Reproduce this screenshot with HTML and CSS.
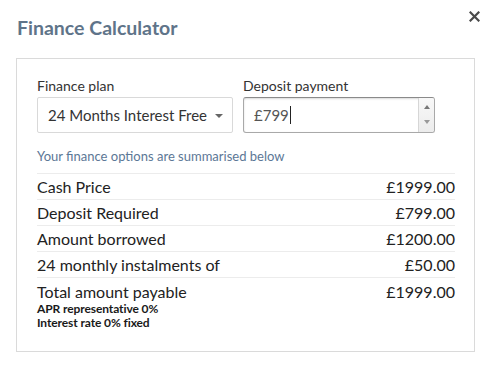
FILE: index.html
```html
<!DOCTYPE html>
<html lang="en">
<head>
    <meta charset="UTF-8">
    <title>Finance Calculator</title>
    <link rel="stylesheet" href="styles.css">
</head>
<body>
    <div class="modal">
        <div class="modal-header">
            <h1 class="modal-title">Finance Calculator</h1>
            <button class="close-btn" aria-label="Close">
                <svg width="11" height="11" viewBox="0 0 11 11">
                    <path d="M1.5 1.5 L9.5 9.5 M9.5 1.5 L1.5 9.5" stroke="#4a4a4a" stroke-width="2.2" stroke-linecap="square"/>
                </svg>
            </button>
        </div>

        <div class="panel">
            <div class="form-row">
                <div class="field field-plan">
                    <label>Finance plan</label>
                    <div class="select">
                        <span>24 Months Interest Free</span>
                        <span class="caret"></span>
                    </div>
                </div>
                <div class="field field-deposit">
                    <label>Deposit payment</label>
                    <div class="number-input">
                        <span class="value">£799<span class="cursor"></span></span>
                        <div class="spinner">
                            <span class="spin-up"></span>
                            <span class="spin-down"></span>
                        </div>
                    </div>
                </div>
            </div>

            <p class="summary-note">Your finance options are summarised below</p>

            <div class="summary">
                <div class="summary-row">
                    <span>Cash Price</span>
                    <span>£1999.00</span>
                </div>
                <div class="summary-row">
                    <span>Deposit Required</span>
                    <span>£799.00</span>
                </div>
                <div class="summary-row">
                    <span>Amount borrowed</span>
                    <span>£1200.00</span>
                </div>
                <div class="summary-row">
                    <span>24 monthly instalments of</span>
                    <span>£50.00</span>
                </div>
                <div class="summary-row total">
                    <div>
                        <span>Total amount payable</span>
                        <p class="small-print">APR representative 0%<br>Interest rate 0% fixed</p>
                    </div>
                    <span>£1999.00</span>
                </div>
            </div>
        </div>
    </div>
</body>
</html>
```

FILE: styles.css
```css
* {
    margin: 0;
    padding: 0;
    box-sizing: border-box;
}

body {
    background: #fff;
    font-family: Lato, 'Open Sans', sans-serif;
    color: #222;
    width: 490px;
    height: 384px;
    overflow: hidden;
}

.modal {
    padding: 14px 15px 0 16px;
}

.modal-header {
    display: flex;
    justify-content: space-between;
    align-items: flex-start;
    height: 44px;
}

.modal-title {
    font-size: 19.5px;
    font-weight: 700;
    color: #5f7489;
    padding-left: 1px;
    line-height: 28px;
}

.close-btn {
    background: none;
    border: none;
    margin-top: -4px;
    margin-right: -5px;
    padding: 0;
    width: 11px;
    height: 11px;
    cursor: pointer;
}

.panel {
    border: 1px solid #dadada;
    width: 459px;
    height: 294px;
    padding: 17px 19px 0 20px;
}

.form-row {
    display: flex;
    gap: 10px;
}

.field label {
    display: block;
    font-size: 14px;
    color: #333;
    line-height: 19px;
    margin-bottom: 2px;
}

.select {
    width: 196px;
    height: 36px;
    border: 1px solid #d9d9d9;
    border-radius: 2px;
    display: flex;
    align-items: center;
    justify-content: space-between;
    padding: 0 9px 0 10px;
    font-size: 15px;
    color: #333;
}

.caret {
    width: 0;
    height: 0;
    border-left: 4px solid transparent;
    border-right: 4px solid transparent;
    border-top: 4px solid #666;
    margin-top: 1px;
}

.number-input {
    width: 192px;
    height: 36px;
    border: 1px solid #a9a9a9;
    border-top-color: #8a8a8a;
    border-radius: 3px;
    box-shadow: inset 0 1px 2px rgba(0, 0, 0, 0.15);
    display: flex;
    align-items: center;
    justify-content: space-between;
    padding-left: 10px;
    font-size: 15px;
    color: #555;
}

.value {
    display: flex;
    align-items: center;
}

.cursor {
    display: inline-block;
    width: 1px;
    height: 18px;
    background: #222;
    margin-left: 1px;
}

.spinner {
    width: 16px;
    height: 34px;
    border-left: 1px solid #d6d6d6;
    background: linear-gradient(#f8f8f8, #ececec);
    border-radius: 0 2px 2px 0;
    display: flex;
    flex-direction: column;
    align-items: center;
    justify-content: space-between;
    padding: 7px 0 8px;
}

.spin-up {
    border-left: 3px solid transparent;
    border-right: 3px solid transparent;
    border-bottom: 4px solid #777;
}

.spin-down {
    border-left: 3px solid transparent;
    border-right: 3px solid transparent;
    border-top: 4px solid #999;
}

.summary-note {
    font-size: 13px;
    color: #5c7796;
    margin-top: 14px;
    line-height: 18px;
}

.summary {
    margin-top: 8px;
    width: 418px;
}

.summary-row {
    display: flex;
    justify-content: space-between;
    border-top: 1px solid #ececec;
    height: 26px;
    align-items: center;
    font-size: 16px;
    color: #222;
}

.summary-row.total {
    align-items: flex-start;
    height: auto;
    padding-top: 4px;
    line-height: 20px;
}

.small-print {
    font-size: 12px;
    font-weight: 700;
    color: #1a1a1a;
    line-height: 14px;
    letter-spacing: -0.1px;
}
```
